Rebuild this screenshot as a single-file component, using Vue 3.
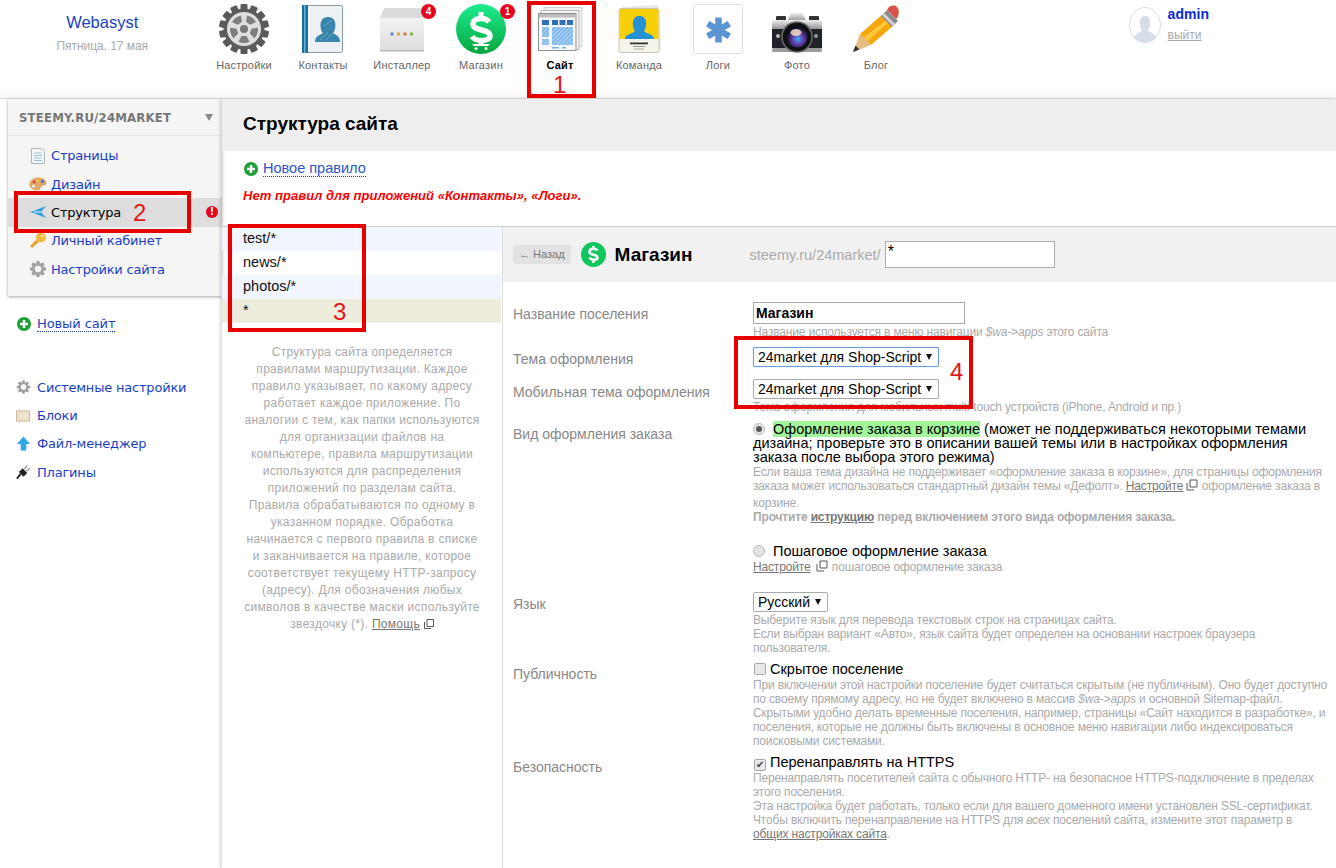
<script setup>
const apps = [
  { name: 'Настройки', id: 'gear' },
  { name: 'Контакты', id: 'book' },
  { name: 'Инсталлер', id: 'box', badge: 4 },
  { name: 'Магазин', id: 'shop', badge: 1 },
  { name: 'Сайт', id: 'site', active: true },
  { name: 'Команда', id: 'team' },
  { name: 'Логи', id: 'logs' },
  { name: 'Фото', id: 'photo' },
  { name: 'Блог', id: 'blog' }
]
const rules = [
  { t: 'test/*', c: 'odd' },
  { t: 'news/*', c: '' },
  { t: 'photos/*', c: 'odd' },
  { t: '*', c: 'picked' }
]
const teeth = Array.from({ length: 14 }, (_, i) => (i * 360) / 14)
const spokes = [0, 72, 144, 216, 288]
const miniTeeth = [0, 45, 90, 135, 180, 225, 270, 315]
</script>

<template>
  <div class="page">
    <header class="top">
      <div class="brand">
        <a class="brand-name">Webasyst</a>
        <div class="brand-date">Пятница, 17 мая</div>
      </div>
      <nav class="apps">
        <div v-for="a in apps" :key="a.id" class="app" :class="{ active: a.active }">
          <div class="app-icon">
            <svg v-if="a.id === 'gear'" viewBox="0 0 50 50" width="50" height="50">
              <g fill="#595959"><rect v-for="d in teeth" :key="d" x="21.500" y="0" width="7" height="8" rx="1" :transform="`rotate(${d} 25 25)`" /></g>
              <circle cx="25" cy="25" r="20.500" fill="#5c5c5c" />
              <circle cx="25" cy="25" r="17" fill="#dedede" />
              <g fill="#7d7d7d"><path v-for="d in spokes" :key="d" d="M19.500 12.200a14 14 0 0 1 11 0l-3 5.800h-5z" :transform="`rotate(${d + 36} 25 25)`" /></g>
              <circle cx="25" cy="25" r="4" fill="#777" />
            </svg>
            <svg v-else-if="a.id === 'book'" viewBox="0 0 50 50" width="50" height="50">
              <rect x="4.500" y="1.500" width="40" height="47" rx="2" fill="#eef1f3" stroke="#8a9aa3" />
              <rect x="4" y="1" width="6" height="48" rx="1" fill="#1d6d9c" />
              <rect x="6" y="1" width="1.500" height="48" fill="#63b0d8" />
              <path d="M17 38c0-6 5-7 8-9-3-3-5-16 5-16s8 13 5 16c3 2 7 3 7 9z" fill="#3a85ad" />
              <path d="M22 36l8-8M28 36l8-8M26 22l8-6" stroke="#7fb6d2" stroke-width=".7" />
            </svg>
            <svg v-else-if="a.id === 'box'" viewBox="0 0 50 50" width="50" height="50">
              <defs><linearGradient id="boxg" x1="0" y1="0" x2="0" y2="1"><stop offset="0" stop-color="#f3f3f3" /><stop offset="1" stop-color="#dcdcdc" /></linearGradient></defs>
              <path d="M7 4h36l4 10H3z" fill="#dcdcdc" />
              <rect x="3" y="14" width="44" height="33" fill="url(#boxg)" />
              <rect x="3" y="46" width="44" height="1.500" fill="#b5b5b5" />
              <circle cx="15" cy="30" r="1.700" fill="#6d83c9" /><circle cx="21.500" cy="30" r="1.700" fill="#d9a93a" /><circle cx="28" cy="30" r="1.700" fill="#d07a3a" /><circle cx="34.500" cy="30" r="1.700" fill="#7fae4a" />
            </svg>
            <svg v-else-if="a.id === 'shop'" viewBox="0 0 50 50" width="50" height="50">
              <defs><linearGradient id="sg" x1="0" y1="0" x2="0" y2="1"><stop offset="0" stop-color="#1dec8e" /><stop offset="1" stop-color="#06a63f" /></linearGradient></defs>
              <circle cx="25" cy="25" r="25" fill="url(#sg)" />
              <path d="M33 18c-1.500-2.500-4-3.500-8-3.500-5 0-8 2-8 5.500 0 8 17 4 17 12 0 3-4 4.500-8.500 4.500-4 0-7.500-1.200-9.500-4" fill="none" stroke="#fff" stroke-width="5.500" />
              <rect x="22.500" y="8" width="5" height="8" fill="#fff" /><rect x="22.500" y="35" width="5" height="6" fill="#fff" />
              <path d="M16 40h18l-2 2H18z" fill="#fff" />
              <circle cx="20" cy="44.500" r="1.500" fill="#fff" /><circle cx="30" cy="44.500" r="1.500" fill="#fff" />
            </svg>
            <svg v-else-if="a.id === 'site'" viewBox="0 0 50 50" width="50" height="50">
              <defs><pattern id="hatch" width="3" height="3" patternUnits="userSpaceOnUse" patternTransform="rotate(45)"><rect width="3" height="3" fill="#a6cff2" /><rect width="1.200" height="3" fill="#72b0e8" /></pattern></defs>
              <rect x="9" y="3.500" width="38" height="39" fill="#f0f0f0" stroke="#d2d2d2" />
              <rect x="6" y="6.500" width="38" height="39" fill="#f4f4f4" stroke="#b9b9b9" />
              <rect x="3.500" y="9.500" width="37.500" height="37" fill="#f6f8fb" stroke="#8f8f8f" />
              <rect x="4" y="10" width="36.500" height="3.500" fill="#bdbdbd" />
              <rect x="7" y="16" width="7" height="5" fill="#2d70b8" /><rect x="17" y="16" width="6" height="5" fill="#2d70b8" /><rect x="24.500" y="16" width="6" height="5" fill="#2d70b8" /><rect x="32" y="16" width="6" height="5" fill="#2d70b8" />
              <rect x="7" y="23" width="7" height="10" fill="url(#hatch)" /><rect x="7" y="35" width="7" height="6" fill="url(#hatch)" /><rect x="17" y="23" width="21" height="18" fill="url(#hatch)" />
              <rect x="17" y="43" width="7" height="1.500" fill="#72b0e8" /><rect x="27" y="43" width="4" height="1.500" fill="#72b0e8" />
            </svg>
            <svg v-else-if="a.id === 'team'" viewBox="0 0 50 50" width="50" height="50">
              <path d="M8 3l36 -2 3 44-36 2z" fill="#e6e6e6" />
              <path d="M4 6l36-3 5 42-36 2z" fill="#efefef" />
              <rect x="5" y="4.500" width="40" height="44" rx="2" fill="#f5f3ea" stroke="#c9c6b8" />
              <rect x="5.500" y="5" width="39" height="30" fill="#f9cf0a" />
              <path d="M11 35c0-5 8-5 10-8-3-4-4-15 4.500-15s7.500 11 4.500 15c2 3 10 3 10 8z" fill="#2592d8" />
              <rect x="16" y="38.500" width="18" height="1.800" fill="#333" /><rect x="19" y="42" width="12" height="1" fill="#999" /><rect x="20" y="44.500" width="10" height="1" fill="#aaa" />
            </svg>
            <svg v-else-if="a.id === 'logs'" viewBox="0 0 50 50" width="50" height="50">
              <rect x="0.500" y="0.500" width="49" height="49" rx="3" fill="#fff" stroke="#e0e0e0" />
              <path d="M25.500 13.500v25M14.700 19.750l21.600 12.500M14.700 32.250l21.600-12.500" stroke="#5b93d3" stroke-width="6.500" />
            </svg>
            <svg v-else-if="a.id === 'photo'" viewBox="0 0 50 50" width="50" height="50">
              <defs>
                <linearGradient id="silver" x1="0" y1="0" x2="0" y2="1"><stop offset="0" stop-color="#eee" /><stop offset="1" stop-color="#8a8a8a" /></linearGradient>
                <radialGradient id="lens" cx=".55" cy=".6" r=".55"><stop offset="0" stop-color="#2ab8ee" /><stop offset=".45" stop-color="#6a3fb0" /><stop offset="1" stop-color="#0d1020" /></radialGradient>
              </defs>
              <path d="M15 18l4-9h11l5 9z" fill="url(#silver)" />
              <rect x="4" y="12" width="10" height="5" rx="1" fill="#333" /><rect x="37" y="12" width="10" height="5" rx="1" fill="#333" />
              <rect x="0" y="16" width="50" height="10" rx="2" fill="url(#silver)" />
              <rect x="0" y="25" width="50" height="19" fill="#1f2227" />
              <rect x="0" y="44" width="50" height="4" rx="1.500" fill="#9c9c9c" />
              <circle cx="25" cy="33" r="15" fill="#0d0f13" stroke="#6a6a6a" stroke-width="1.500" />
              <circle cx="25" cy="33" r="10.500" fill="url(#lens)" />
              <ellipse cx="24" cy="28.500" rx="5.500" ry="3.500" fill="#f6dfc8" opacity=".85" />
              <circle cx="6" cy="32" r="2" fill="#bbb" /><circle cx="44" cy="32" r="2" fill="#999" />
            </svg>
            <svg v-else viewBox="0 0 50 50" width="50" height="50">
              <path d="M2 48l7-18 11 11z" fill="#e3bd85" />
              <path d="M2 48l2.500-6.500 4 4z" fill="#333" />
              <path d="M9 30l23-20 11 11-23 20z" fill="#f6a609" />
              <path d="M13 33l24-18 2 2-22 20z" fill="#ffc53d" />
              <path d="M30 12l6-6 11 11-6 6z" fill="#8d8d8d" />
              <path d="M33 9l11 11-2 2-11-11z" fill="#d5d5d5" />
              <path d="M36 6c1-4 7-6 10-3s2 10-1 12z" fill="#d9554c" />
            </svg>
            <span v-if="a.badge" class="badge">{{ a.badge }}</span>
          </div>
          <div class="app-name">{{ a.name }}</div>
        </div>
      </nav>
      <div class="user">
        <svg class="avatar" viewBox="0 0 32 36" width="32" height="36">
          <ellipse cx="16" cy="18" rx="15.500" ry="17.500" fill="#fff" stroke="#d5dee8" />
          <path d="M5 31c1-5 7-5 8-8-3-3-4-14 3-14s6 11 3 14c1 3 7 3 8 8-3 3-7 4-11 4s-8-1-11-4z" fill="#d5dee8" />
        </svg>
        <div>
          <a class="user-name">admin</a>
          <a class="logout">выйти</a>
        </div>
      </div>
    </header>

    <div class="layout">
      <aside class="side">
        <div class="site-card">
          <div class="site-head"><span>STEEMY.RU/24MARKET</span><i class="tri"></i></div>
          <ul class="menu">
            <li><svg width="18" height="16" viewBox="0 0 18 16"><path d="M2.500 .5h10l3 3v12h-13z" fill="#f4f7fa" stroke="#a9b5bf" /><path d="M5 5h8M5 7.500h8M5 10h8M5 12.500h8" stroke="#9dc0dc" /></svg><a>Страницы</a></li>
            <li><svg width="18" height="16" viewBox="0 0 18 16"><path d="M9 1.500c5 0 8.500 2.500 8.500 5.500 0 2-2 2.500-3.500 2.500-2 0-2 3-4 4.500-4 1-9.500-1-9.500-5.500C.5 4.500 4 1.500 9 1.500z" fill="#e2a667" /><circle cx="5" cy="6" r="1.600" fill="#d9483b" /><circle cx="9" cy="4.500" r="1.600" fill="#e8c23a" /><circle cx="13.500" cy="5.500" r="1.700" fill="#3f7fd0" /><circle cx="4.500" cy="10" r="1.600" fill="#f0f0e8" /></svg><a>Дизайн</a></li>
            <li class="cur"><svg width="18" height="14" viewBox="0 0 18 14"><path d="M17 1L6 5.500 1 7l5 1.500L17 13l-5-6z" fill="#2a9ee0" /><path d="M5 7h7" stroke="#e4f2fb" stroke-width="1" /></svg><a>Структура</a><b class="excl">!</b></li>
            <li><svg width="18" height="17" viewBox="0 0 18 17"><path d="M10.500 9.500L3 16l-2-2 7-7" fill="#e8a52e" /><circle cx="12" cy="5.500" r="5" fill="#f0b93e" /><circle cx="13.500" cy="4" r="1.300" fill="#fbe7ae" /></svg><a>Личный кабинет</a></li>
            <li><svg width="18" height="16" viewBox="0 0 18 16"><g fill="#999"><rect v-for="d in miniTeeth" :key="d" x="7.500" y="0" width="3" height="3" :transform="`rotate(${d} 9 8)`" /></g><circle cx="9" cy="8" r="4.700" fill="none" stroke="#a3a3a3" stroke-width="3" /></svg><a>Настройки сайта</a></li>
          </ul>
        </div>
        <div class="new-site"><svg class="plus" width="14" height="14" viewBox="0 0 14 14"><circle cx="7" cy="7" r="7" fill="#1f9d36" /><path d="M7 3v8M3 7h8" stroke="#fff" stroke-width="2.500" /></svg><a class="dotted">Новый сайт</a></div>
        <ul class="sys">
          <li><svg width="16" height="16" viewBox="0 0 18 16"><g fill="#999"><rect v-for="d in miniTeeth" :key="d" x="7.500" y="0" width="3" height="3" :transform="`rotate(${d} 9 8)`" /></g><circle cx="9" cy="8" r="4.700" fill="none" stroke="#a3a3a3" stroke-width="3" /></svg><a>Системные настройки</a></li>
          <li><svg width="16" height="14" viewBox="0 0 16 14"><rect x=".5" y="1.500" width="14" height="11" fill="#f3e6d3" stroke="#c9b79c" /><rect x="2.500" y="3.500" width="10" height="7" fill="none" stroke="#d8c8ae" stroke-dasharray="1 1" /></svg><a>Блоки</a></li>
          <li><svg width="16" height="16" viewBox="0 0 16 16"><path d="M8 0l7 8h-4v7H5V8H1z" fill="#2fa8e8" /></svg><a>Файл-менеджер</a></li>
          <li><svg width="16" height="16" viewBox="0 0 16 16"><path d="M1 15l4-5" stroke="#222" stroke-width="2" /><path d="M3 8l5 5 4-4-5-5z" fill="#222" /><path d="M9 5l3-4M11 7l4-3" stroke="#999" stroke-width="1.500" /></svg><a>Плагины</a></li>
        </ul>
      </aside>

      <main class="main">
        <h1 class="title">Структура сайта</h1>
        <div class="intro">
          <div class="new-rule"><svg class="plus" width="14" height="14" viewBox="0 0 14 14"><circle cx="7" cy="7" r="7" fill="#1f9d36" /><path d="M7 3v8M3 7h8" stroke="#fff" stroke-width="2.500" /></svg><a class="dotted">Новое правило</a></div>
          <div class="warn">Нет правил для приложений «Контакты», «Логи».</div>
        </div>
        <div class="split">
          <section class="rules">
            <div v-for="r in rules" :key="r.t" class="rule" :class="r.c">{{ r.t }}</div>
            <p class="help">Структура сайта определяется<br>правилами маршрутизации. Каждое<br>правило указывает, по какому адресу<br>работает каждое приложение. По<br>аналогии с тем, как папки используются<br>для организации файлов на<br>компьютере, правила маршрутизации<br>используются для распределения<br>приложений по разделам сайта.<br>Правила обрабатываются по одному в<br>указанном порядке. Обработка<br>начинается с первого правила в списке<br>и заканчивается на правиле, которое<br>соответствует текущему HTTP-запросу<br>(адресу). Для обозначения любых<br>символов в качестве маски используйте<br>звездочку (*). <a class="hl">Помощь</a> <svg class="ext" width="10" height="10" viewBox="0 0 10 10"><path d="M3 .5h6.500v7H3zM.5 3v6.500H7" fill="none" stroke="#555" /></svg></p>
          </section>
          <section class="detail">
            <div class="detail-head">
              <span class="back">← Назад</span>
              <svg width="25" height="25" viewBox="0 0 25 25"><circle cx="12.500" cy="12.500" r="12.500" fill="#0fc65f" /><path d="M16.500 8.500c-1-1.200-2.500-1.800-4-1.800-2.300 0-4 1-4 3 0 4 8 2 8 5.800 0 1.600-1.800 2.200-3.800 2.200-1.800 0-3.500-.6-4.400-1.900" fill="none" stroke="#fff" stroke-width="2.600" /><rect x="11.300" y="4" width="2.400" height="3" fill="#fff" /><rect x="11.300" y="18" width="2.400" height="3" fill="#fff" /></svg>
              <span class="detail-title">Магазин</span>
              <span class="url">steemy.ru/24market/</span>
              <span class="url-input">*</span>
            </div>
            <div class="form">
              <div class="row r-name">
                <label>Название поселения</label>
                <div><div class="name-input">Магазин</div><div class="hint">Название используется в меню навигации <em>$wa-&gt;apps</em> этого сайта</div></div>
              </div>
              <div class="row r-theme">
                <label>Тема оформления</label>
                <div><span class="sel focus">24market для Shop-Script<i></i></span></div>
              </div>
              <div class="row r-mobile">
                <label>Мобильная тема оформления</label>
                <div><span class="sel">24market для Shop-Script<i></i></span><div class="hint">Тема оформления для мобильных multi-touch устройств (iPhone, Android и пр.)</div></div>
              </div>
              <div class="row r-order">
                <label>Вид оформления заказа</label>
                <div>
                  <div class="body-text"><span class="radio on"></span><mark>Оформление заказа в корзине</mark> (может не поддерживаться некоторыми темами<br>дизайна; проверьте это в описании вашей темы или в настройках оформления<br>заказа после выбора этого режима)</div>
                  <div class="hint first">Если ваша тема дизайна не поддерживает «оформление заказа в корзине», для страницы оформления<br>заказа может использоваться стандартный дизайн темы «Дефолт». <a class="hl">Настройте</a> <svg class="ext" width="12" height="12" viewBox="0 0 12 12"><path d="M4 1h7v7H4zM1 4v7h7" fill="none" stroke="#555" /></svg> оформление заказа в</div>
                  <div class="hint gap"><span>корзине.</span><br><b>Прочтите <a class="hl">иструкцию</a> перед включением этого вида оформления заказа.</b></div>
                  <div class="body-text step"><span class="radio"></span>Пошаговое оформление заказа</div>
                  <div class="hint step-hint"><a class="hl">Настройте</a> <svg class="ext wide" width="12" height="12" viewBox="0 0 12 12"><path d="M4 1h7v7H4zM1 4v7h7" fill="none" stroke="#555" /></svg> пошаговое оформление заказа</div>
                </div>
              </div>
              <div class="row r-lang">
                <label>Язык</label>
                <div><span class="sel">Русский<i></i></span><div class="hint">Выберите язык для перевода текстовых строк на страницах сайта.<br>Если выбран вариант «Авто», язык сайта будет определен на основании настроек браузера<br>пользователя.</div></div>
              </div>
              <div class="row r-pub">
                <label>Публичность</label>
                <div><div class="body-text"><span class="check"></span>Скрытое поселение</div><div class="hint">При включении этой настройки поселение будет считаться скрытым (не публичным). Оно будет доступно<br>по своему прямому адресу, но не будет включено в массив <em>$wa-&gt;apps</em> и основной Sitemap-файл.<br>Скрытыми удобно делать временные поселения, например, страницы «Сайт находится в разработке», и<br>поселения, которые не должны быть включены в основное меню навигации либо индексироваться<br>поисковыми системами.</div></div>
              </div>
              <div class="row r-sec">
                <label>Безопасность</label>
                <div><div class="body-text"><span class="check">✔</span>Перенаправлять на HTTPS</div><div class="hint">Перенаправлять посетителей сайта с обычного HTTP- на безопасное HTTPS-подключение в пределах<br>этого поселения.<br>Эта настройка будет работать, только если для вашего доменного имени установлен SSL-сертификат.<br>Чтобы включить перенаправление на HTTPS для <em>всех</em> поселений сайта, измените этот параметр в<br><a class="hl">общих настройках сайта</a>.</div></div>
              </div>
            </div>
          </section>
        </div>
      </main>
    </div>

    <div class="mark-box m1"><span>1</span></div>
    <div class="mark-box m2"><span>2</span></div>
    <div class="mark-box m3"><span>3</span></div>
    <div class="mark-box m4"><span>4</span></div>
  </div>
</template>

<style>
html, body { margin: 0; background: #fff; }
</style>

<style scoped>
.page { position: relative; width: 1336px; height: 868px; overflow: hidden; font-family: "Liberation Sans", Arial, sans-serif; color: #000; background: #fff; }
ul { list-style: none; margin: 0; padding: 0; }
a { cursor: pointer; }
.top { height: 98px; display: flex; border-bottom: 1px solid #ddd; background: linear-gradient(#fff 88%, #f7f7f7); }
.brand { width: 204.500px; padding-top: 12px; text-align: center; box-sizing: border-box; }
.brand-name { color: #1a3fc4; font-size: 16.500px; line-height: 20px; }
.brand-date { color: #aaa; font-size: 12px; margin-top: 7px; letter-spacing: -.05px; }
.apps { display: flex; width: 711px; }
.app { width: 79px; text-align: center; padding-top: 4px; flex: none; }
.app-icon { position: relative; width: 50px; height: 50px; margin: 0 auto; }
.app-icon svg { display: block; }
.app-name { font-size: 11px; color: #666; margin-top: 5px; line-height: 13px; letter-spacing: .2px; }
.app.active .app-name { color: #000; font-weight: bold; }
.badge { position: absolute; top: 0; right: -9px; width: 15px; height: 15px; line-height: 15px; border-radius: 50%; background: #e8001c; color: #fff; font-size: 10px; font-weight: bold; text-align: center; }
.user { display: flex; gap: 7px; padding: 6px 0 0 213px; }
.avatar { display: block; margin-top: 1px; }
.user-name { display: block; color: #0a2ad8; font-size: 14px; font-weight: bold; line-height: 16px; letter-spacing: .1px; }
.logout { display: block; color: #aaa; font-size: 12px; line-height: 14px; margin-top: 6px; text-decoration: underline; }

.layout { display: flex; height: 769px; }
.side { width: 222px; flex: none; font-family: "DejaVu Sans", sans-serif; }
.site-card { margin-left: 8px; height: 197px; background: #f5f5f5; box-shadow: 0 1px 3px rgba(0,0,0,.35); }
.site-head { height: 36px; display: flex; justify-content: space-between; align-items: center; padding: 0 9px 0 11px; border-bottom: 1px solid #e8e8e8; color: #777; font-weight: bold; font-size: 13px; font-family: "DejaVu Sans Condensed", "DejaVu Sans", sans-serif; letter-spacing: .2px; }
.tri { width: 0; height: 0; border: 4px solid transparent; border-top: 7px solid #888; border-bottom: 0; }
.menu { padding-top: 5.500px; }
.menu li { height: 28.400px; display: flex; align-items: center; position: relative; padding-left: 21px; }
.menu li svg { flex: none; margin-right: 4px; }
.menu a, .sys a { color: #1a3fc4; font-size: 13px; letter-spacing: -.2px; }
.menu li.cur { background: #ddd; }
.menu li.cur a { color: #000; }
.excl { position: absolute; right: 4px; top: 8px; width: 12px; height: 12px; border-radius: 50%; background: #e8001c; color: #fff; font-size: 10px; line-height: 12px; text-align: center; }
.new-site { margin: 20px 0 0 17px; display: flex; align-items: center; gap: 6px; }
.dotted { color: #1a3fc4; border-bottom: 1px dotted #1a3fc4; font-size: 13px; line-height: 15px; letter-spacing: -.1px; }
.sys { margin: 41px 0 0 16px; }
.sys li { height: 28.400px; display: flex; align-items: center; gap: 6px; }
.sys li svg { width: 15px; flex: none; }

.main { flex: 1; min-width: 0; box-shadow: -2px 0 3px rgba(0,0,0,.15); position: relative; }
.title { margin: 0; height: 52px; line-height: 49px; background: #eee; padding-left: 21px; font-size: 19px; font-weight: bold; box-sizing: border-box; }
.intro { height: 75px; padding: 10px 0 0 22px; box-sizing: border-box; }
.new-rule { display: flex; align-items: center; gap: 5px; font-size: 15px; }
.new-rule .dotted { font-size: 14.500px; font-family: "Liberation Sans", sans-serif; color: #2a55c8; letter-spacing: 0; }
.warn { color: #f00; font-weight: bold; font-style: italic; font-size: 13px; margin-top: 11px; letter-spacing: .05px; margin-left: -1px; }
.split { display: flex; border-top: 1px solid #ccc; height: 642px; }
.rules { width: 281px; flex: none; border-right: 1px solid #ddd; box-sizing: border-box; }
.rule { height: 24px; line-height: 23px; padding-left: 21px; font-size: 14.500px; color: #111; margin-right: 1px; }
.rule.odd { background: #f1f5fd; }
.rule.picked { background: #edecdd; line-height: 22px; }
.help { margin: 21px 20px 0; text-align: center; color: #aaa; font-size: 12px; line-height: 17px; white-space: nowrap; letter-spacing: .3px; }
.hl { color: #777; text-decoration: underline; }
.ext { vertical-align: -1px; }
.ext.wide { margin: 0 1px 0 2px; }

.detail { flex: 1; min-width: 0; }
.detail-head { height: 55px; background: #f1f1f1; display: flex; align-items: center; padding-left: 10px; }
.back { background: #e2e2e2; color: #777; font-size: 11px; line-height: 19px; height: 19px; padding: 0 6px; border-radius: 3px; margin-right: 10px; }
.detail-title { font-size: 19px; font-weight: bold; margin: 0 57px 0 9px; }
.url { color: #aaa; font-size: 14.500px; margin-right: 4px; }
.url-input { display: block; width: 170px; height: 27px; line-height: 20px; border: 1px solid #aaa; background: #fff; font-size: 16px; padding-left: 2px; box-sizing: border-box; color: #000; }
.form { padding: 20px 0 0 10px; }
.row { display: flex; }
.row label { width: 240px; flex: none; color: #888; font-size: 14px; line-height: 16px; }
.row > div { flex: 1; min-width: 0; }
.name-input { width: 212px; height: 22px; line-height: 20px; border: 1px solid #aaa; box-sizing: border-box; font-weight: bold; font-size: 14px; padding-left: 2px; }
.hint { color: #aaa; font-size: 12px; line-height: 14px; white-space: nowrap; letter-spacing: -.16px; }
.sel { display: inline-block; position: relative; height: 20px; line-height: 18px; padding: 0 17px 0 4px; border: 1px solid #aaa; border-radius: 2px; box-sizing: border-box; font-size: 14px; background: #fff; white-space: nowrap; }
.sel.focus { border-color: #6b9be0; box-shadow: 0 0 1px #6b9be0; }
.sel i { position: absolute; right: 6px; top: 6px; width: 0; height: 0; border: 3.500px solid transparent; border-top: 6px solid #111; border-bottom: 0; }
.r-name { height: 45px; }
.r-name label { padding-top: 4px; }
.r-name .hint { margin-top: 1px; }
.r-theme { height: 32px; }
.r-theme label { padding-top: 4px; }
.r-mobile { height: 44px; }
.r-mobile label { padding-top: 5px; }
.r-mobile .hint { margin-top: 1px; }
.r-order { height: 169px; }
.r-order label { padding-top: 3px; }
.body-text { font-size: 14.500px; line-height: 14px; white-space: nowrap; }
.r-order > div > .body-text:first-child { margin-top: -1px; }
.first { margin-top: 1px; }
mark { background: #a3f59a; color: inherit; }
.radio { display: inline-block; width: 12px; height: 12px; border-radius: 50%; background: #e4e4e4; border: 1px solid #bbb; box-sizing: border-box; margin-right: 8px; vertical-align: -1px; position: relative; }
.radio.on::after { content: ""; position: absolute; inset: 2px; border-radius: 50%; background: #555; }
.gap { margin-top: 3px; }
.step { margin-top: 19px; line-height: 16px; }
.step-hint { margin-top: 1px; }
.r-lang { height: 70px; }
.r-lang label { padding-top: 4px; }
.r-lang .hint { margin-top: 1px; }
.r-pub { height: 93px; }
.r-pub label { padding-top: 4px; }
.r-pub .hint { margin-top: 2px; }
.r-sec label { padding-top: 4px; }
.check { display: inline-block; width: 12px; height: 12px; border: 1px solid #aaa; border-radius: 2px; box-sizing: border-box; margin: 0 4px 0 1px; vertical-align: -1px; font-size: 10px; line-height: 10px; text-align: center; background: #e8e8e8; color: #444; }
.mark-box { position: absolute; border: 4px solid #e60000; box-sizing: border-box; z-index: 5; }
.mark-box span { position: absolute; color: #e31818; font-size: 24px; line-height: 24px; }
.m1 { left: 527px; top: 1px; width: 69px; height: 97px; }
.m1 span { left: 22px; top: 68px; }
.m2 { left: 14px; top: 191px; width: 177px; height: 42px; }
.m2 span { left: 115px; top: 6px; }
.m3 { left: 228px; top: 224px; width: 138px; height: 108px; }
.m3 span { left: 101px; top: 72px; }
.m4 { left: 734px; top: 336px; width: 239px; height: 73px; }
.m4 span { left: 212px; top: 20px; }
</style>
